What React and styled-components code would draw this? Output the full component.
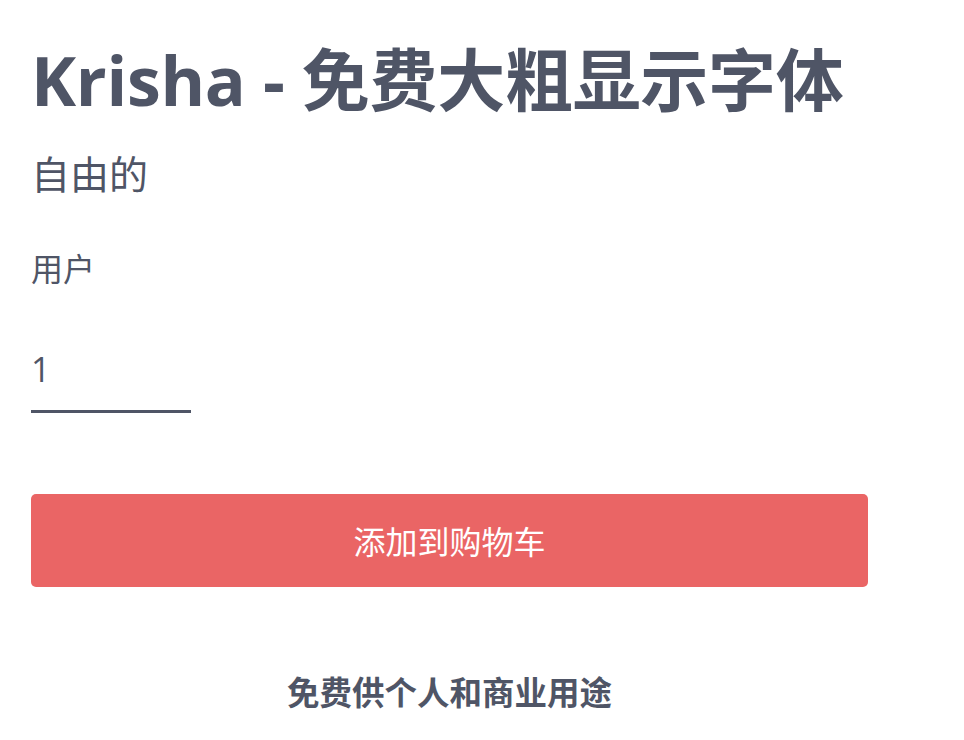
import React from 'react'
import styled, { createGlobalStyle } from 'styled-components'

const GlobalStyle = createGlobalStyle`
  body {
    margin: 0;
    background: #fff;
    font-family: "Open Sans", "Noto Sans CJK SC", sans-serif;
    color: #4f5566;
  }
`

function App() {
    return (
        <>
            <GlobalStyle />
            <Product>
                <Title>Krisha - 免费大粗显示字体</Title>
                <Price>自由的</Price>
                <Label>用户</Label>
                <Quantity>1</Quantity>
                <CartButton>添加到购物车</CartButton>
                <License>免费供个人和商业用途</License>
            </Product>
        </>
    )
}

export default App

const Product = styled.div`
    width: 837px;
    padding: 36px 0 0 31px;
    display: flex;
    flex-direction: column;
`

const Title = styled.h1`
    margin: 0;
    font-size: 68px;
    font-weight: 700;
    line-height: 1.3;
    letter-spacing: -0.3px;
`

const Price = styled.div`
    margin-top: 25px;
    font-size: 39px;
    line-height: 1.3;
`

const Label = styled.div`
    margin-top: 48px;
    font-size: 32px;
    line-height: 1.3;
`

const Quantity = styled.div`
    margin-top: 57px;
    width: 160px;
    font-size: 34px;
    line-height: 1.3;
    padding-bottom: 19px;
    border-bottom: 3px solid #4f5566;
`

const CartButton = styled.button`
    margin-top: 81px;
    height: 93px;
    border: none;
    border-radius: 5px;
    background: #ea6565;
    color: #fff;
    font-family: "Open Sans", "Noto Sans CJK SC", sans-serif;
    font-size: 32px;
`

const License = styled.div`
    margin-top: 80px;
    text-align: center;
    font-size: 32.5px;
    font-weight: 700;
`
